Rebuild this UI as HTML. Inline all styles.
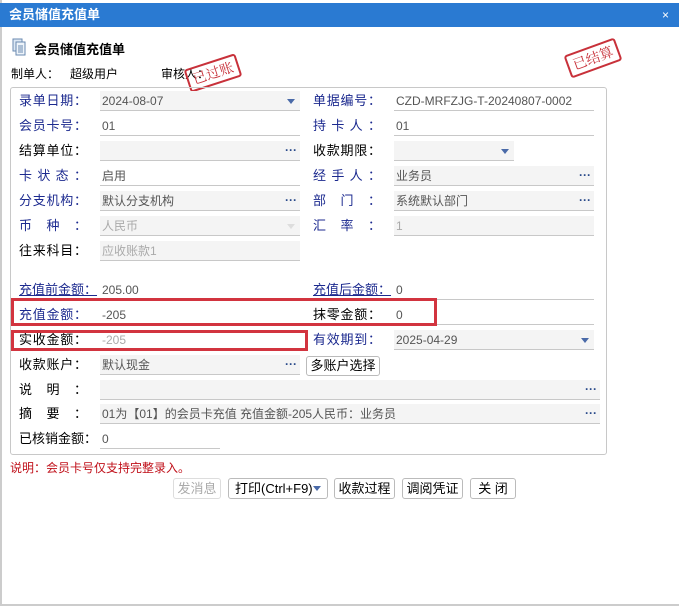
<!DOCTYPE html>
<html><head><meta charset="utf-8"><style>
*{margin:0;padding:0;box-sizing:border-box}
body{width:679px;height:606px;overflow:hidden;background:#fff;font-family:"Liberation Sans","Noto Sans CJK SC",sans-serif;font-size:12px;color:#333;position:relative}
.a{position:absolute}
.tb{left:0;top:3px;width:679px;height:24px;background:#2a7ad2;color:#fff;font-weight:bold;font-size:13px;line-height:24px;padding-left:9px}
.lb{position:absolute;width:68px;height:20px;line-height:20px;font-size:13px;text-align:justify;text-align-last:justify;color:#000;white-space:nowrap}
.lb6{text-align:left;text-align-last:left;width:auto}
.bl{color:#1c2a8f}
.in{position:absolute;height:20px;line-height:20px;padding-left:2px;font-size:12px;color:#555;border-bottom:1px solid #c8c8c8;background:#f4f4f4;white-space:nowrap}
.w{background:#fff}
.dis{color:#aaa}
.dots{position:absolute;right:3px;top:-1px;color:#2a4a8a;font-weight:bold;letter-spacing:0}
.arr{position:absolute;right:5px;top:8px;width:0;height:0;border-left:4px solid transparent;border-right:4px solid transparent;border-top:5px solid #4a6aa8}
.btn{position:absolute;top:478px;height:21px;border:1px solid #bbb;border-radius:3px;background:#fff;font-size:13px;line-height:19px;text-align:center;color:#000;white-space:nowrap}
.stamp{position:absolute;border:2px solid #c8313a;color:#c8313a;font-family:"Noto Serif CJK SC",serif;font-size:14px;border-radius:3px;padding:0 4px;line-height:20px}
</style></head><body>
<div class="a" style="left:0;top:0;width:2px;height:606px;background:#ccc"></div>
<div class="a" style="left:0;top:604px;width:679px;height:2px;background:#ccc"></div>
<div class="a tb">会员储值充值单<span style="position:absolute;right:10px;top:0;font-size:12px;font-weight:normal">×</span></div>
<svg class="a" style="left:12px;top:38px" width="14" height="18" viewBox="0 0 14 18"><rect x="1" y="1" width="9" height="12" fill="#dde8f4" stroke="#6a8ab0"/><rect x="4" y="4" width="9" height="13" fill="#eef4fa" stroke="#6a8ab0"/><path d="M6 8h5M6 10h5M6 12h5M6 14h5" stroke="#6a8ab0"/></svg>
<div class="a" style="left:34px;top:39px;font-weight:bold;font-size:13px;color:#000">会员储值充值单</div>
<div class="a" style="left:11px;top:65px;font-size:12px;color:#000">制单人：</div>
<div class="a" style="left:70px;top:65px;font-size:12px;color:#000">超级用户</div>
<div class="a" style="left:161px;top:65px;font-size:12px;color:#000">审核人：</div>
<div class="stamp" style="left:186px;top:61px;transform:rotate(-18deg)">已过账</div>
<div class="stamp" style="left:566px;top:46px;transform:rotate(-20deg)">已结算</div>

<div class="a" style="left:10px;top:87px;width:597px;height:368px;border:1px solid #c8c8c8;border-radius:3px"></div>

<div class="lb bl" style="left:19px;top:91px">录单日期：</div><div class="in" style="left:100px;top:91px;width:200px">2024-08-07<i class="arr"></i></div>
<div class="lb bl" style="left:19px;top:116px">会员卡号：</div><div class="in w" style="left:100px;top:116px;width:200px">01</div>
<div class="lb" style="left:19px;top:141px">结算单位：</div><div class="in" style="left:100px;top:141px;width:200px"><span class="dots">···</span></div>
<div class="lb bl" style="left:19px;top:166px">卡 状 态 ：</div><div class="in w" style="left:100px;top:166px;width:200px">启用</div>
<div class="lb bl" style="left:19px;top:191px">分支机构：</div><div class="in" style="left:100px;top:191px;width:200px">默认分支机构<span class="dots">···</span></div>
<div class="lb bl" style="left:19px;top:216px">币　种　：</div><div class="in dis" style="left:100px;top:216px;width:200px">人民币<i class="arr" style="border-top-color:#ddd"></i></div>
<div class="lb" style="left:19px;top:241px">往来科目：</div><div class="in dis" style="left:100px;top:241px;width:200px">应收账款1</div>

<div class="lb lb6 bl" style="left:19px;top:280px;text-decoration:underline">充值前金额：</div><div class="in w" style="left:100px;top:280px;width:200px">205.00</div>
<div class="lb bl" style="left:19px;top:305px">充值金额：</div><div class="in w" style="left:100px;top:305px;width:200px">-205</div>
<div class="lb" style="left:19px;top:330px">实收金额：</div><div class="in w dis" style="left:100px;top:330px;width:200px">-205</div>
<div class="lb" style="left:19px;top:355px">收款账户：</div><div class="in" style="left:100px;top:355px;width:200px">默认现金<span class="dots">···</span></div>
<div class="lb" style="left:19px;top:380px">说　明　：</div><div class="in" style="left:100px;top:380px;width:500px"><span class="dots">···</span></div>
<div class="lb" style="left:19px;top:404px">摘　要　：</div><div class="in" style="left:100px;top:404px;width:500px">01为【01】的会员卡充值 充值金额-205人民币：业务员<span class="dots">···</span></div>
<div class="lb lb6" style="left:19px;top:429px">已核销金额：</div><div class="in w" style="left:100px;top:429px;width:120px">0</div>

<div class="lb bl" style="left:313px;top:91px">单据编号：</div><div class="in w" style="left:394px;top:91px;width:200px">CZD-MRFZJG-T-20240807-0002</div>
<div class="lb bl" style="left:313px;top:116px">持 卡 人 ：</div><div class="in w" style="left:394px;top:116px;width:200px">01</div>
<div class="lb" style="left:313px;top:141px">收款期限：</div><div class="in" style="left:394px;top:141px;width:120px"><i class="arr"></i></div>
<div class="lb bl" style="left:313px;top:166px">经 手 人 ：</div><div class="in" style="left:394px;top:166px;width:200px">业务员<span class="dots">···</span></div>
<div class="lb bl" style="left:313px;top:191px">部　门　：</div><div class="in" style="left:394px;top:191px;width:200px">系统默认部门<span class="dots">···</span></div>
<div class="lb bl" style="left:313px;top:216px">汇　率　：</div><div class="in dis" style="left:394px;top:216px;width:200px">1</div>
<div class="lb lb6 bl" style="left:313px;top:280px;text-decoration:underline">充值后金额：</div><div class="in w" style="left:394px;top:280px;width:200px">0</div>
<div class="lb" style="left:313px;top:305px">抹零金额：</div><div class="in w" style="left:394px;top:305px;width:200px">0</div>
<div class="lb bl" style="left:313px;top:330px">有效期到：</div><div class="in" style="left:394px;top:330px;width:200px">2025-04-29<i class="arr"></i></div>
<div class="btn" style="left:306px;top:356px;width:74px;height:20px;line-height:18px">多账户选择</div>

<div class="a" style="left:11px;top:298px;width:426px;height:28px;border:3px solid #d2343f"></div>
<div class="a" style="left:11px;top:330px;width:297px;height:21px;border:3px solid #d2343f"></div>

<div class="a" style="left:10px;top:459px;color:#c0101a;font-size:12px">说明：会员卡号仅支持完整录入。</div>
<div class="btn" style="left:173px;width:48px;color:#aaa;border-color:#ddd">发消息</div>
<div class="btn" style="left:228px;width:100px;text-align:left;padding-left:6px">打印(Ctrl+F9)<i class="arr" style="top:7px;right:6px"></i></div>
<div class="btn" style="left:334px;width:61px">收款过程</div>
<div class="btn" style="left:402px;width:61px">调阅凭证</div>
<div class="btn" style="left:470px;width:46px">关 闭</div>
</body></html>
